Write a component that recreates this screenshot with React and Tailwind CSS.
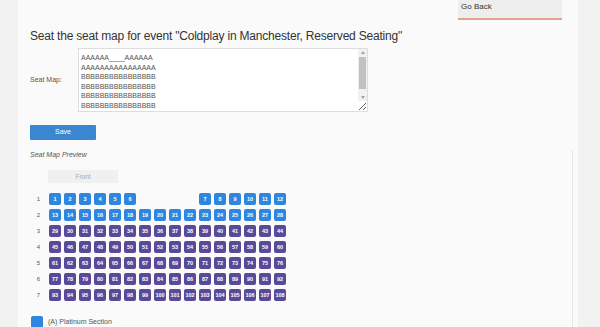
import React from "react";

const seatMap = [
  "AAAAAA____AAAAAA",
  "AAAAAAAAAAAAAAAA",
  "BBBBBBBBBBBBBBBB",
  "BBBBBBBBBBBBBBBB",
  "BBBBBBBBBBBBBBBB",
  "BBBBBBBBBBBBBBBB",
  "BBBBBBBBBBBBBBBB",
];

const SeatRow = ({ row, index, startNo }) => {
  let n = startNo;
  return (
    <div className="flex items-center h-[16px]">
      <span className="w-[19px] pr-[9px] text-right text-[6px] text-[#555]">{index + 1}</span>
      <div className="flex gap-[3px]">
        {row.split("").map((ch, i) => {
          if (ch === "_") return <span key={i} className="w-[12px] h-[12px]" />;
          n += 1;
          return (
            <span
              key={i}
              className={`w-[12px] h-[12px] rounded-[2px] flex items-center justify-center text-[5.5px] font-bold text-white ${
                ch === "A" ? "bg-[#2f86de]" : "bg-[#584a98]"
              }`}
            >
              {n}
            </span>
          );
        })}
      </div>
    </div>
  );
};

const App = () => {
  let count = 0;
  const starts = seatMap.map((r) => {
    const s = count;
    count += r.split("").filter((c) => c !== "_").length;
    return s;
  });

  return (
    <div className="h-[327px] overflow-hidden bg-[#f2f2f2] flex font-['Liberation_Sans',Arial,sans-serif] text-[#333]">
      <div className="ml-[18px] w-[560px] bg-[#fafafa] flex flex-col">
        <div className="flex justify-end pr-[16px]">
          <div className="w-[104px] h-[20px] bg-[#eeeeee] border-b-2 border-[#e8a090] pl-[3px] pt-[1px] text-[8px] text-[#333]">
            Go Back
          </div>
        </div>

        <h1 className="mt-[9px] pl-[12px] text-[12px] tracking-[-0.2px] leading-[15px] text-[#333]">
          Seat the seat map for event "Coldplay in Manchester, Reserved Seating"
        </h1>

        <div className="flex items-center mt-[4px] pl-[12px]">
          <label className="w-[48px] text-[7px] text-[#555]">Seat Map:</label>
          <div className="relative">
            <textarea
              className="block w-[290px] h-[64px] bg-white border border-[#ddd] pl-[2px] pr-[12px] pt-[4px] pb-[2px] text-[7px] leading-[9.5px] text-[#555] resize-y outline-none overflow-hidden"
              defaultValue={seatMap.join("\n")}
            />
            {/* fake scrollbar */}
            <div className="absolute top-[1px] right-[1px] bottom-[11px] w-[9px] bg-[#f1f1f1] flex flex-col items-center">
              <span className="mt-[2px] w-0 h-0 border-x-[2px] border-x-transparent border-b-[3px] border-b-[#a3a3a3]" />
              <span className="mt-[3px] w-[7px] h-[32px] bg-[#c1c1c1]" />
              <span className="mt-auto mb-[2px] w-0 h-0 border-x-[2px] border-x-transparent border-t-[3px] border-t-[#a3a3a3]" />
            </div>
          </div>
        </div>

        <div className="flex pl-[12px] mt-[13px]">
          <button className="w-[66px] h-[15px] bg-[#3b86d1] text-white text-[7px] rounded-[1px]">Save</button>
        </div>

        <div className="flex-1 ml-[12px] mr-[5px] border-r border-[#e6e6e6] mt-[10px]">
          <div className="text-[7px] italic text-[#555] leading-[10px]">Seat Map Preview</div>
          <div className="ml-[18px] mt-[10px] w-[70px] h-[13px] bg-[#f0f0f0] flex items-center justify-center text-[6.5px] text-[#aaa]">
            Front
          </div>
          <div className="mt-[8px] flex flex-col">
            {seatMap.map((row, i) => (
              <SeatRow key={i} row={row} index={i} startNo={starts[i]} />
            ))}
          </div>
          <div className="mt-[13px] flex items-center gap-[5px] pl-[1px]">
            <span className="w-[12px] h-[12px] rounded-[2px] bg-[#2f86de]" />
            <span className="text-[7px] text-[#555]">(A) Platinum Section</span>
          </div>
        </div>
      </div>
    </div>
  );
};

export default App;
